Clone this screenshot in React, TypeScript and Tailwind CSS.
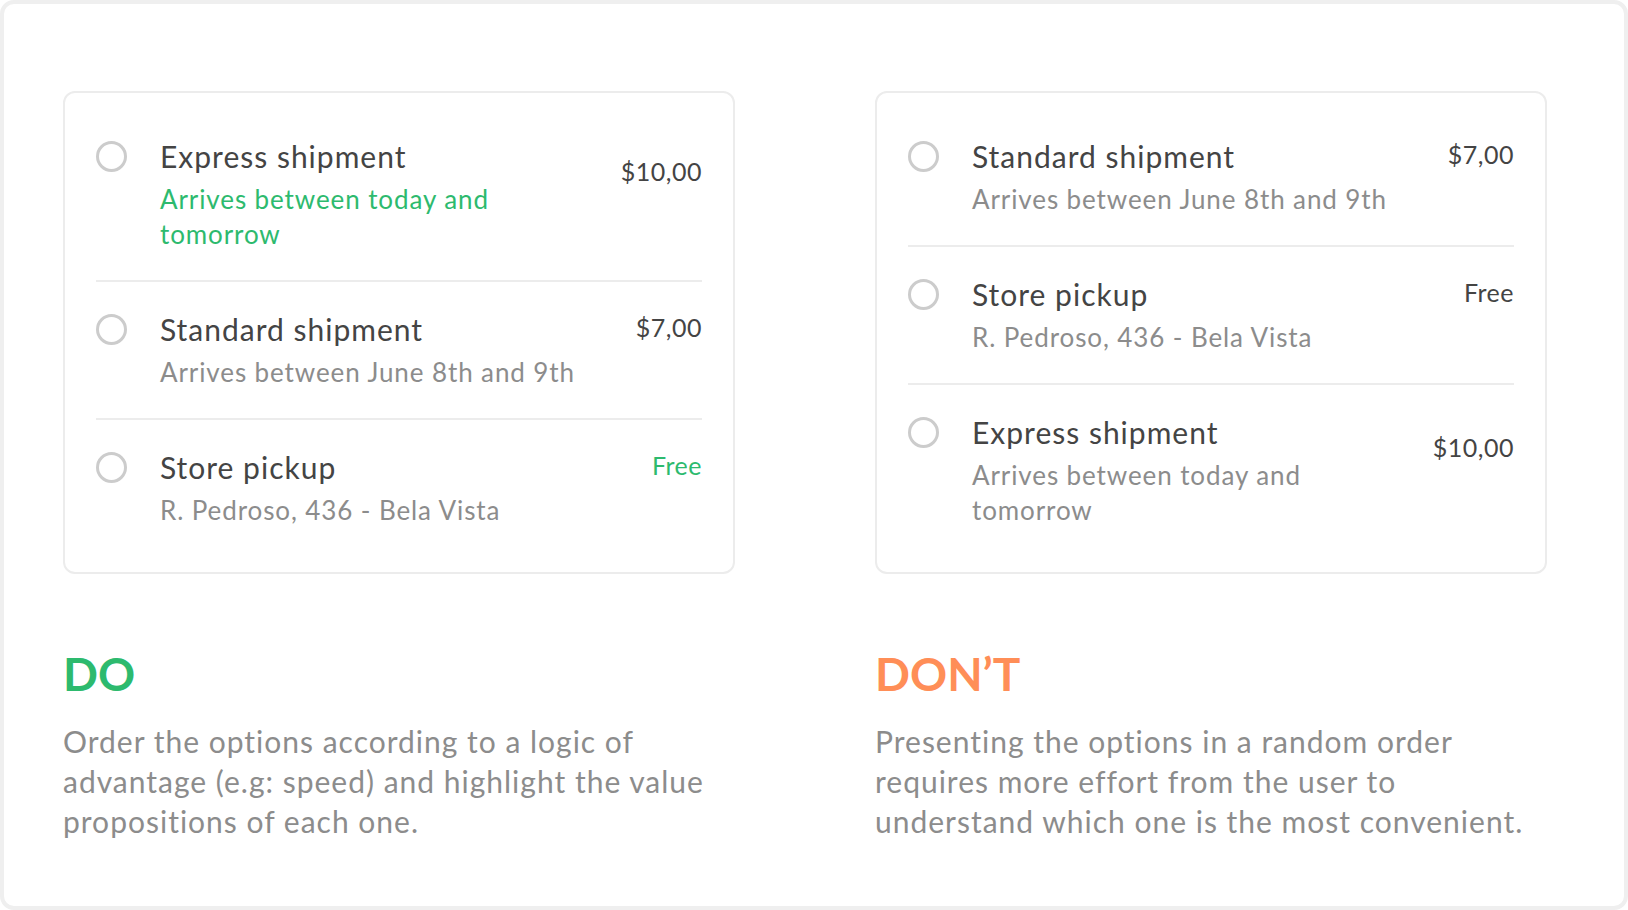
type Option = {
  title: string;
  lines: string[];
  price: string;
  highlight?: boolean;
  priceGreen?: boolean;
  priceOffset?: boolean;
};

const doOptions: Option[] = [
  {
    title: "Express shipment",
    lines: ["Arrives between today and", "tomorrow"],
    price: "$10,00",
    highlight: true,
    priceOffset: true,
  },
  {
    title: "Standard shipment",
    lines: ["Arrives between June 8th and 9th"],
    price: "$7,00",
  },
  {
    title: "Store pickup",
    lines: ["R. Pedroso, 436 - Bela Vista"],
    price: "Free",
    priceGreen: true,
  },
];

const dontOptions: Option[] = [
  {
    title: "Standard shipment",
    lines: ["Arrives between June 8th and 9th"],
    price: "$7,00",
  },
  {
    title: "Store pickup",
    lines: ["R. Pedroso, 436 - Bela Vista"],
    price: "Free",
  },
  {
    title: "Express shipment",
    lines: ["Arrives between today and", "tomorrow"],
    price: "$10,00",
    priceOffset: true,
  },
];

function OptionRow({ option, last }: { option: Option; last: boolean }) {
  return (
    <div
      className={`flex justify-between pt-[29px] pb-[28px] ${
        last ? "" : "border-b-2 border-[#ececec]"
      }`}
    >
      <div>
        <div className="flex items-center h-[36px]">
          <div className="w-[31px] h-[31px] rounded-full border-[3px] border-[#cccccc] shrink-0" />
          <div className="ml-[33px] text-[30px] leading-[36px] tracking-[1px] text-[#444444]">
            {option.title}
          </div>
        </div>
        <div
          className={`ml-[64px] mt-[8px] text-[26px] leading-[35px] tracking-[0.9px] ${
            option.highlight ? "text-[#2dba6e]" : "text-[#8c8c8c]"
          }`}
        >
          {option.lines.map((l, i) => (
            <div key={i}>{l}</div>
          ))}
        </div>
      </div>
      <div
        className={`text-[25px] leading-[36px] tracking-[0.5px] ${
          option.priceOffset ? "mt-[15px]" : "mt-[-2px]"
        } ${option.priceGreen ? "text-[#2dba6e]" : "text-[#444444]"}`}
      >
        {option.price}
      </div>
    </div>
  );
}

function Card({ options }: { options: Option[] }) {
  return (
    <div className="border-2 border-[#ececec] rounded-[12px] px-[31px] py-[16px]">
      {options.map((o, i) => (
        <OptionRow key={i} option={o} last={i === options.length - 1} />
      ))}
    </div>
  );
}

export default function App() {
  return (
    <div
      className="w-[1628px] h-[910px] bg-white border-4 border-[#efefef] rounded-[14px] pl-[59px] pt-[87px]"
      style={{ fontFamily: "Lato, 'Open Sans', sans-serif" }}
    >
      <div className="grid grid-cols-[672px_672px] gap-x-[140px]">
        <Card options={doOptions} />
        <Card options={dontOptions} />
        <div className="mt-[72px]">
          <h2 className="text-[46px] leading-[56px] font-bold text-[#2dba6e]">DO</h2>
          <p className="mt-[19px] text-[30px] leading-[40px] tracking-[1px] text-[#8c8c8c]">
            Order the options according to a logic of
            <br />
            advantage (e.g: speed) and highlight the value
            <br />
            propositions of each one.
          </p>
        </div>
        <div className="mt-[72px]">
          <h2 className="text-[46px] leading-[56px] font-bold text-[#ff8e57]">DON’T</h2>
          <p className="mt-[19px] text-[30px] leading-[40px] tracking-[1px] text-[#8c8c8c]">
            Presenting the options in a random order
            <br />
            requires more effort from the user to
            <br />
            understand which one is the most convenient.
          </p>
        </div>
      </div>
    </div>
  );
}
